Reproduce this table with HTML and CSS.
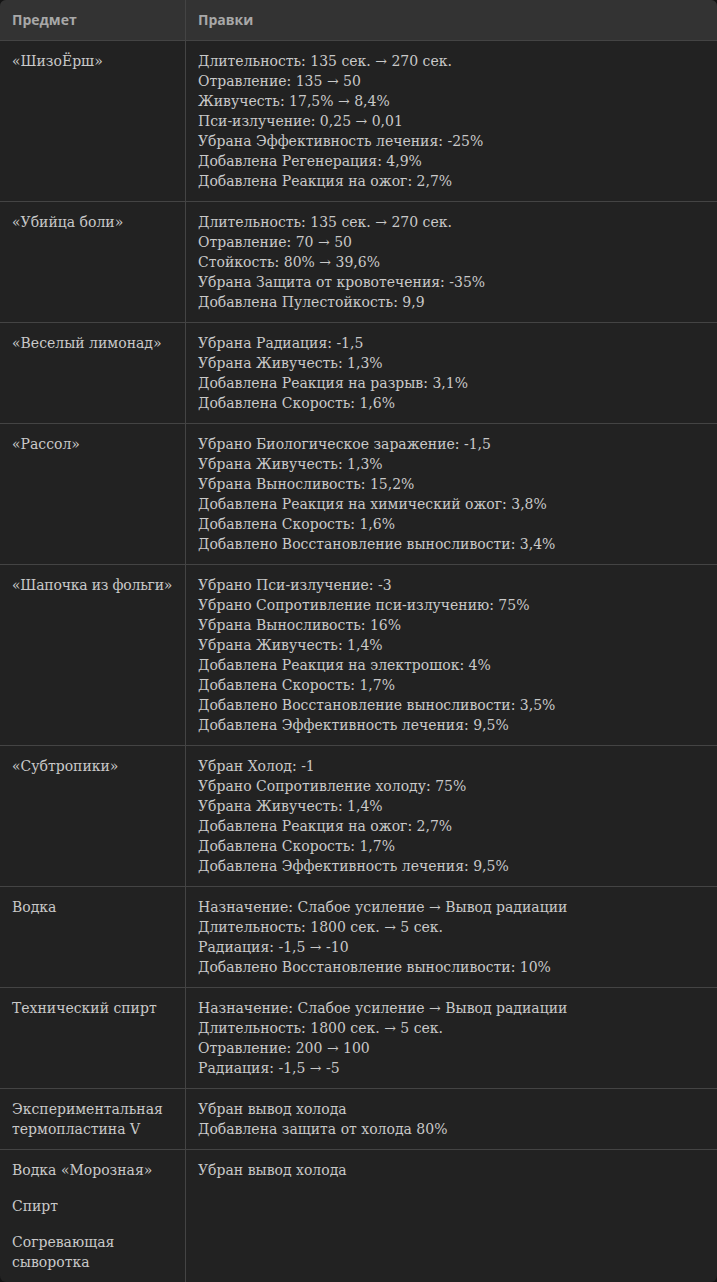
FILE: index.html
```html
<!DOCTYPE html>
<html lang="ru">
<head>
<meta charset="utf-8">
<link rel="stylesheet" href="styles.css">
</head>
<body>
<div class="wrap">
<table class="changes">
<thead>
<tr><th class="c1">Предмет</th><th>Правки</th></tr>
</thead>
<tbody>
<tr><td class="c1">«ШизоЁрш»</td><td>Длительность: 135 сек. → 270 сек.<br>Отравление: 135 → 50<br>Живучесть: 17,5% → 8,4%<br>Пси-излучение: 0,25 → 0,01<br>Убрана Эффективность лечения: -25%<br>Добавлена Регенерация: 4,9%<br>Добавлена Реакция на ожог: 2,7%</td></tr>
<tr><td class="c1">«Убийца боли»</td><td>Длительность: 135 сек. → 270 сек.<br>Отравление: 70 → 50<br>Стойкость: 80% → 39,6%<br>Убрана Защита от кровотечения: -35%<br>Добавлена Пулестойкость: 9,9</td></tr>
<tr><td class="c1">«Веселый лимонад»</td><td>Убрана Радиация: -1,5<br>Убрана Живучесть: 1,3%<br>Добавлена Реакция на разрыв: 3,1%<br>Добавлена Скорость: 1,6%</td></tr>
<tr><td class="c1">«Рассол»</td><td>Убрано Биологическое заражение: -1,5<br>Убрана Живучесть: 1,3%<br>Убрана Выносливость: 15,2%<br>Добавлена Реакция на химический ожог: 3,8%<br>Добавлена Скорость: 1,6%<br>Добавлено Восстановление выносливости: 3,4%</td></tr>
<tr><td class="c1 tight">«Шапочка из фольги»</td><td>Убрано Пси-излучение: -3<br>Убрано Сопротивление пси-излучению: 75%<br>Убрана Выносливость: 16%<br>Убрана Живучесть: 1,4%<br>Добавлена Реакция на электрошок: 4%<br>Добавлена Скорость: 1,7%<br>Добавлено Восстановление выносливости: 3,5%<br>Добавлена Эффективность лечения: 9,5%</td></tr>
<tr><td class="c1">«Субтропики»</td><td>Убран Холод: -1<br>Убрано Сопротивление холоду: 75%<br>Убрана Живучесть: 1,4%<br>Добавлена Реакция на ожог: 2,7%<br>Добавлена Скорость: 1,7%<br>Добавлена Эффективность лечения: 9,5%</td></tr>
<tr><td class="c1">Водка</td><td>Назначение: Слабое усиление → Вывод радиации<br>Длительность: 1800 сек. → 5 сек.<br>Радиация: -1,5 → -10<br>Добавлено Восстановление выносливости: 10%</td></tr>
<tr><td class="c1">Технический спирт</td><td>Назначение: Слабое усиление → Вывод радиации<br>Длительность: 1800 сек. → 5 сек.<br>Отравление: 200 → 100<br>Радиация: -1,5 → -5</td></tr>
<tr><td class="c1">Экспериментальная термопластина V</td><td>Убран вывод холода<br>Добавлена защита от холода 80%</td></tr>
<tr class="last"><td class="c1"><p>Водка «Морозная»</p><p>Спирт</p><p>Согревающая сыворотка</p></td><td>Убран вывод холода</td></tr>
</tbody>
</table>
</div>
</body>
</html>
```
FILE: styles.css
```css
html, body {
  margin: 0;
  padding: 0;
  background: #141414;
}
.wrap {
  width: 717px;
  height: 1282px;
  border-radius: 6px;
  overflow: hidden;
  background: #222222;
}
.changes {
  width: 100%;
  border-collapse: collapse;
  table-layout: fixed;
  font-family: "DejaVu Serif", "Liberation Serif", serif;
  font-size: 14px;
  line-height: 20px;
  color: #c9c9c9;
}
.changes th {
  background: #333333;
  color: #a8a8a8;
  font-family: "Open Sans", "Noto Sans", sans-serif;
  font-weight: 700;
  font-size: 14px;
  text-align: left;
  padding: 10px 12px;
  height: 20px;
  border-bottom: 1px solid #444;
}
.changes th.c1, .changes td.c1 {
  width: 161px;
  border-right: 1px solid #444;
}
.changes td {
  vertical-align: top;
  padding: 10px 12px;
  border-bottom: 1px solid #444;
}
.changes td.tight {
  white-space: nowrap;
  letter-spacing: -0.2px;
}
.changes tr.last td {
  border-bottom: none;
}
.changes td p {
  margin: 0 0 16px;
}
.changes td p:last-child {
  margin-bottom: 0;
}
```
